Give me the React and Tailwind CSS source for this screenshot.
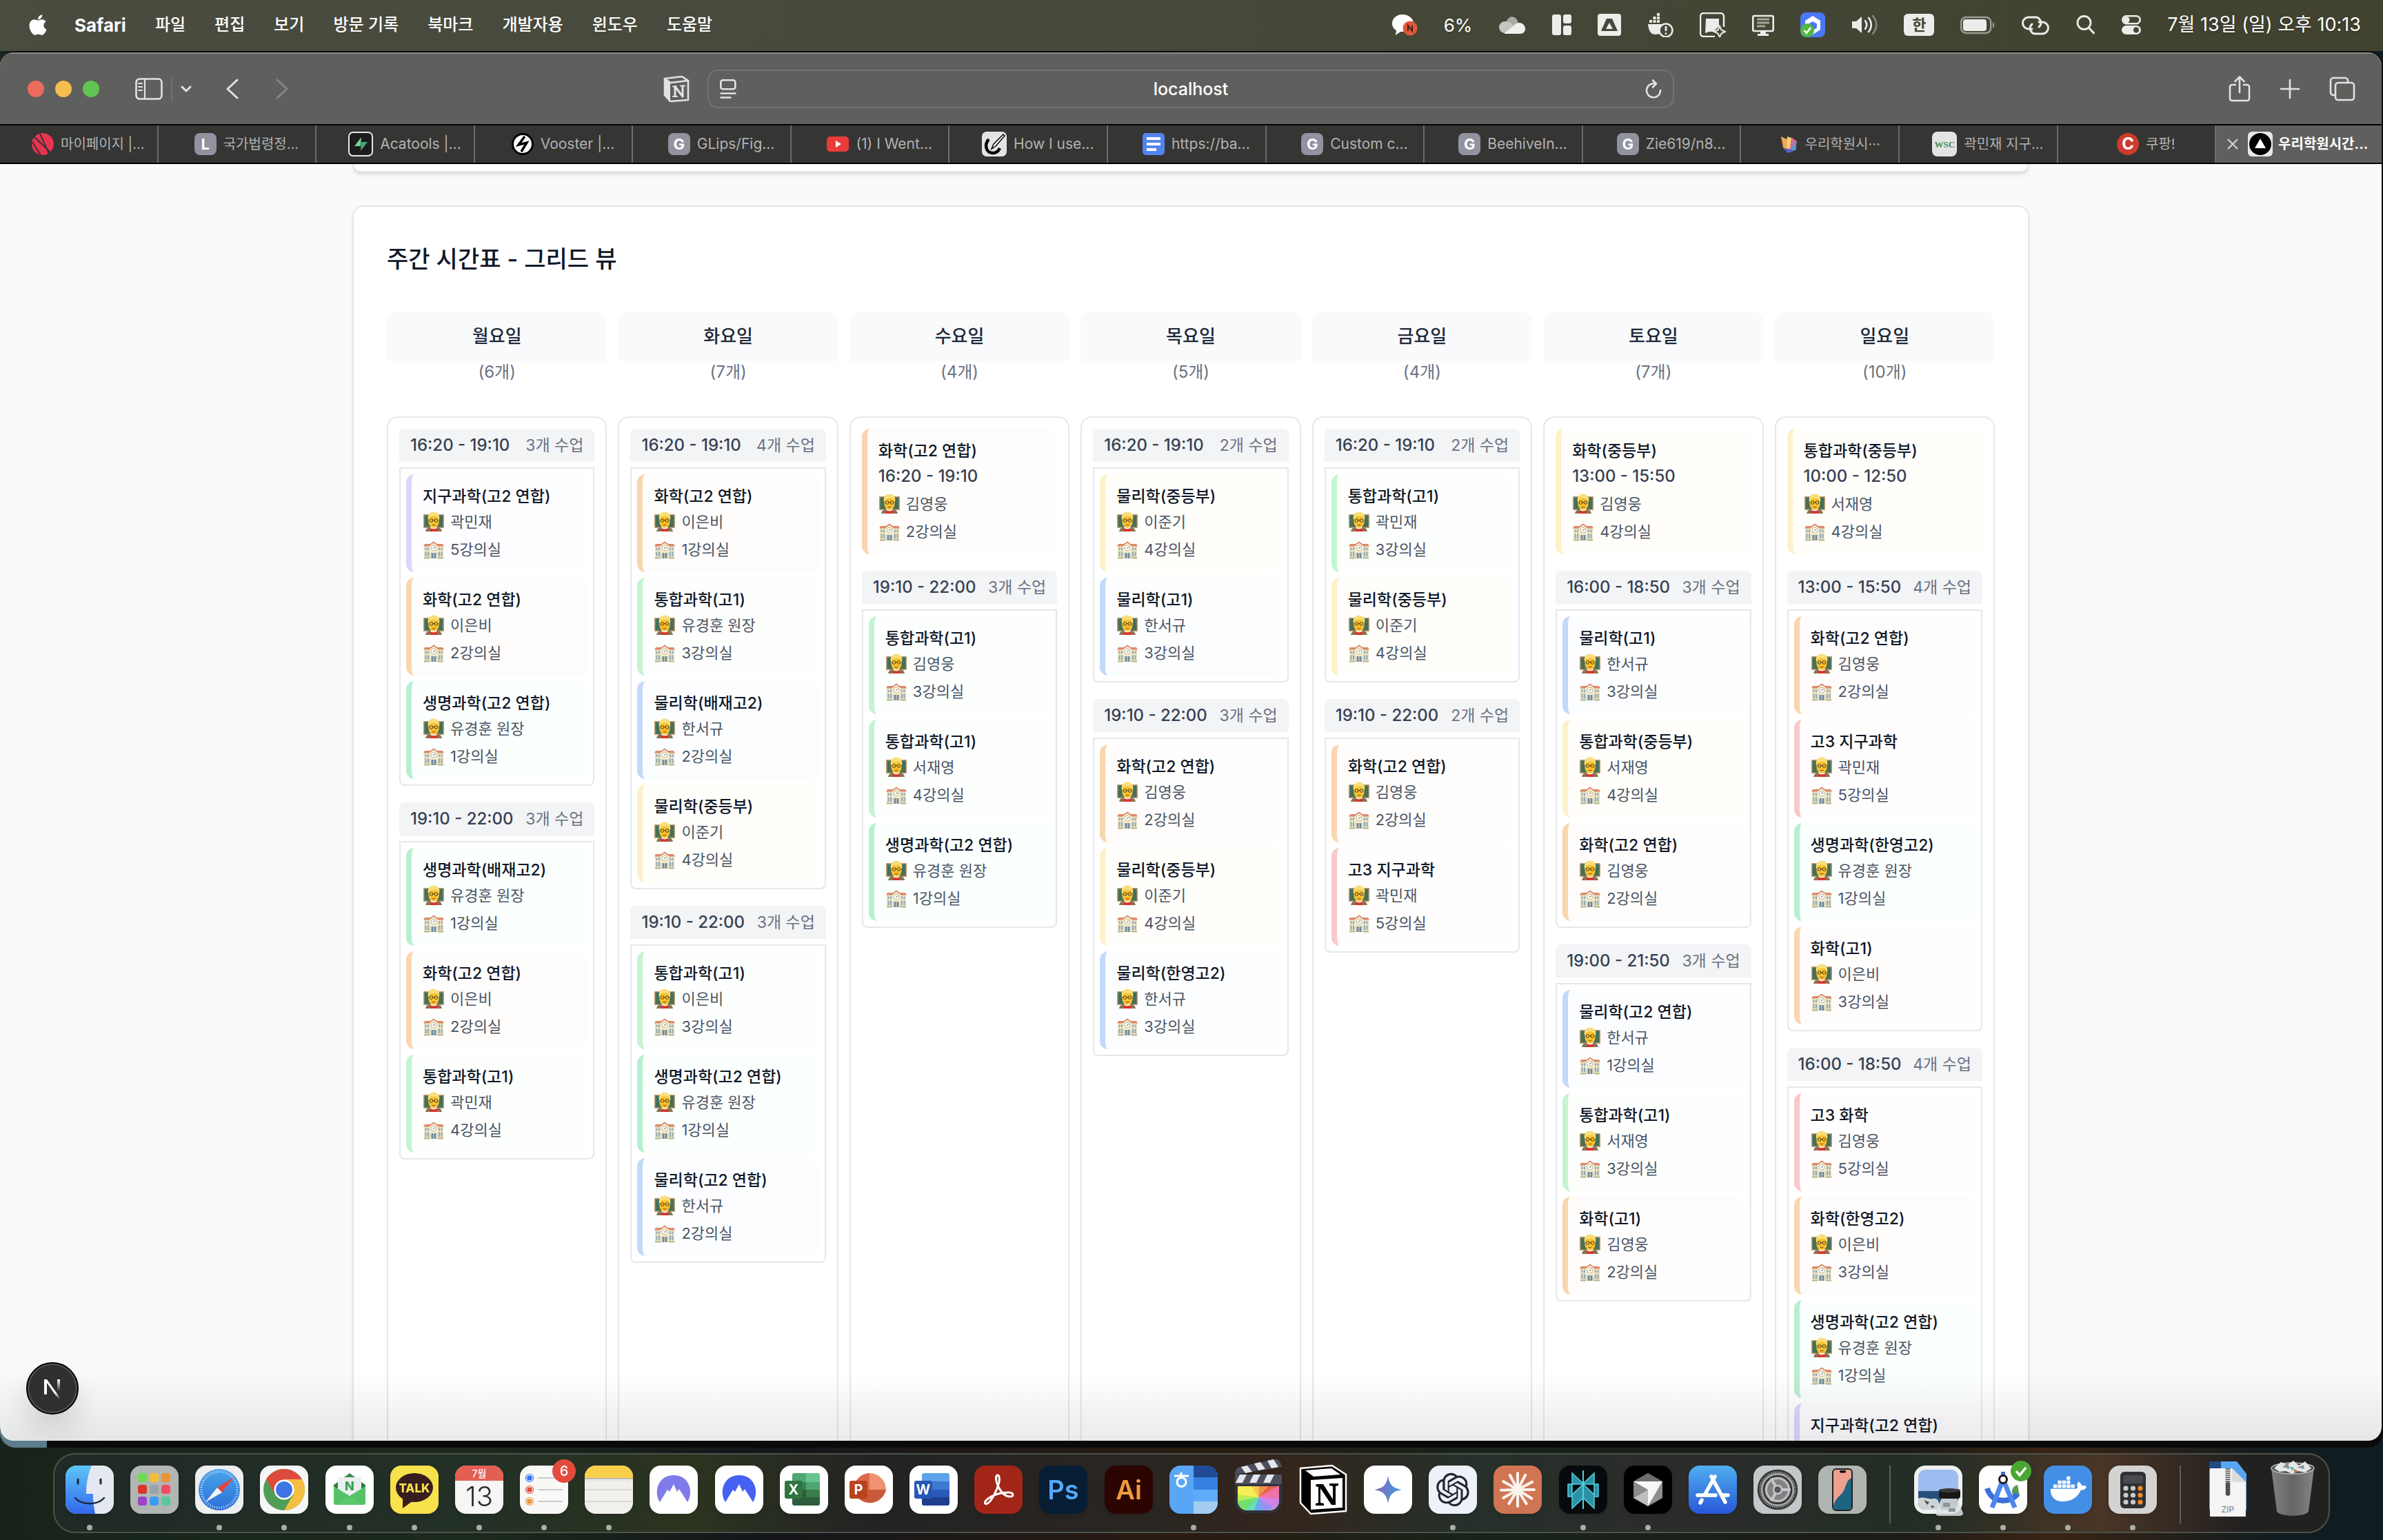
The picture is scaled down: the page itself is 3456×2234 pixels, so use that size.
import React from "react";
import { FaApple, FaDocker } from "react-icons/fa";
import { RiOpenaiFill } from "react-icons/ri";

/* ---------- timetable data ---------- */

const TONES = {
  purple: "border-[#ddd6fb] bg-violet-50/15",
  orange: "border-[#f9d6af] bg-orange-50/20",
  green: "border-[#c5f4d2] bg-green-50/15",
  emerald: "border-[#b7f0d1] bg-emerald-50/20",
  blue: "border-[#c3d9fb] bg-blue-50/20",
  yellow: "border-[#fcf1c9] bg-yellow-50/20",
  red: "border-[#f7c9ca] bg-red-50/15",
};

const c = (tone, name, teacher, room) => ({ tone, name, teacher, room });

const DAYS = [
  {
    day: "월요일",
    count: 6,
    slots: [
      {
        time: "16:20 - 19:10",
        items: [
          c("purple", "지구과학(고2 연합)", "곽민재", "5강의실"),
          c("orange", "화학(고2 연합)", "이은비", "2강의실"),
          c("emerald", "생명과학(고2 연합)", "유경훈 원장", "1강의실"),
        ],
      },
      {
        time: "19:10 - 22:00",
        items: [
          c("emerald", "생명과학(배재고2)", "유경훈 원장", "1강의실"),
          c("orange", "화학(고2 연합)", "이은비", "2강의실"),
          c("green", "통합과학(고1)", "곽민재", "4강의실"),
        ],
      },
    ],
  },
  {
    day: "화요일",
    count: 7,
    slots: [
      {
        time: "16:20 - 19:10",
        items: [
          c("orange", "화학(고2 연합)", "이은비", "1강의실"),
          c("green", "통합과학(고1)", "유경훈 원장", "3강의실"),
          c("blue", "물리학(배재고2)", "한서규", "2강의실"),
          c("yellow", "물리학(중등부)", "이준기", "4강의실"),
        ],
      },
      {
        time: "19:10 - 22:00",
        items: [
          c("green", "통합과학(고1)", "이은비", "3강의실"),
          c("emerald", "생명과학(고2 연합)", "유경훈 원장", "1강의실"),
          c("blue", "물리학(고2 연합)", "한서규", "2강의실"),
        ],
      },
    ],
  },
  {
    day: "수요일",
    count: 4,
    slots: [
      { time: "16:20 - 19:10", items: [c("orange", "화학(고2 연합)", "김영웅", "2강의실")] },
      {
        time: "19:10 - 22:00",
        items: [
          c("green", "통합과학(고1)", "김영웅", "3강의실"),
          c("green", "통합과학(고1)", "서재영", "4강의실"),
          c("emerald", "생명과학(고2 연합)", "유경훈 원장", "1강의실"),
        ],
      },
    ],
  },
  {
    day: "목요일",
    count: 5,
    slots: [
      {
        time: "16:20 - 19:10",
        items: [
          c("yellow", "물리학(중등부)", "이준기", "4강의실"),
          c("blue", "물리학(고1)", "한서규", "3강의실"),
        ],
      },
      {
        time: "19:10 - 22:00",
        items: [
          c("orange", "화학(고2 연합)", "김영웅", "2강의실"),
          c("yellow", "물리학(중등부)", "이준기", "4강의실"),
          c("blue", "물리학(한영고2)", "한서규", "3강의실"),
        ],
      },
    ],
  },
  {
    day: "금요일",
    count: 4,
    slots: [
      {
        time: "16:20 - 19:10",
        items: [
          c("green", "통합과학(고1)", "곽민재", "3강의실"),
          c("yellow", "물리학(중등부)", "이준기", "4강의실"),
        ],
      },
      {
        time: "19:10 - 22:00",
        items: [
          c("orange", "화학(고2 연합)", "김영웅", "2강의실"),
          c("red", "고3 지구과학", "곽민재", "5강의실"),
        ],
      },
    ],
  },
  {
    day: "토요일",
    count: 7,
    slots: [
      { time: "13:00 - 15:50", items: [c("yellow", "화학(중등부)", "김영웅", "4강의실")] },
      {
        time: "16:00 - 18:50",
        items: [
          c("blue", "물리학(고1)", "한서규", "3강의실"),
          c("yellow", "통합과학(중등부)", "서재영", "4강의실"),
          c("orange", "화학(고2 연합)", "김영웅", "2강의실"),
        ],
      },
      {
        time: "19:00 - 21:50",
        items: [
          c("blue", "물리학(고2 연합)", "한서규", "1강의실"),
          c("green", "통합과학(고1)", "서재영", "3강의실"),
          c("orange", "화학(고1)", "김영웅", "2강의실"),
        ],
      },
    ],
  },
  {
    day: "일요일",
    count: 10,
    slots: [
      { time: "10:00 - 12:50", items: [c("yellow", "통합과학(중등부)", "서재영", "4강의실")] },
      {
        time: "13:00 - 15:50",
        items: [
          c("orange", "화학(고2 연합)", "김영웅", "2강의실"),
          c("red", "고3 지구과학", "곽민재", "5강의실"),
          c("emerald", "생명과학(한영고2)", "유경훈 원장", "1강의실"),
          c("orange", "화학(고1)", "이은비", "3강의실"),
        ],
      },
      {
        time: "16:00 - 18:50",
        items: [
          c("red", "고3 화학", "김영웅", "5강의실"),
          c("orange", "화학(한영고2)", "이은비", "3강의실"),
          c("emerald", "생명과학(고2 연합)", "유경훈 원장", "1강의실"),
          c("purple", "지구과학(고2 연합)", "곽민재", "4강의실"),
        ],
      },
    ],
  },
];

/* ---------- timetable ---------- */

function TeacherIcon() {
  return (
    <svg className="size-[30px] shrink-0" viewBox="0 0 30 30" aria-hidden="true">
      <rect x="0" y="4" width="30" height="20" rx="1" fill="#c39a6d" />
      <rect x="1.500" y="5.500" width="27" height="17" fill="#44705a" />
      <path d="M3 29c1-5 5-7 12-7s11 2 12 7z" fill="#8a7352" />
      <path d="M10 29v-4l5-1 5 1v4z" fill="#d8342c" />
      <path d="M10.500 21.500h9v3l-4.500 1-4.500-1z" fill="#f3efe6" />
      <path d="M7.500 10c0-5 3-8 7.500-8s7.500 3 7.500 8v5c0 5-3.500 8.500-7.500 8.500S7.500 20 7.500 15z" fill="#fbc230" />
      <path d="M7 12C5.500 4 10 .5 15 .5S24.500 4 23 12l-1-1-1.500-3.500c-3-1-8-1-11 0L8 11z" fill="#f8df7c" />
      <circle cx="11.500" cy="13" r="2.300" fill="none" stroke="#4a3a1c" strokeWidth="1" />
      <circle cx="18.500" cy="13" r="2.300" fill="none" stroke="#4a3a1c" strokeWidth="1" />
      <path d="M13.800 12.700h2.400" stroke="#4a3a1c" strokeWidth="1" />
      <path d="M12.500 19c1.500 1 3.500 1 5 0" fill="none" stroke="#9a5b13" strokeWidth="1.200" />
    </svg>
  );
}

function SchoolIcon() {
  return (
    <svg className="size-[30px] shrink-0" viewBox="0 0 30 30" aria-hidden="true">
      <rect x="1" y="10" width="28" height="18" fill="#ebe3c2" />
      <path d="M0 10.500L2 7h26l2 3.500z" fill="#dd8a6b" />
      <rect x="9" y="9" width="12" height="19" fill="#f3ecd0" />
      <path d="M8 9.500L15 4.500l7 5" fill="#f3ecd0" stroke="#d9755a" strokeWidth="1.500" />
      <circle cx="15" cy="13" r="4" fill="#fefefb" stroke="#b5a97b" strokeWidth=".8" />
      <path d="M15 13l2-1.500M15 13l-1 1" stroke="#444" strokeWidth=".9" />
      <path
        d="M2.500 12.500h2v3.500h-2zM6 12.500h2v3.500H6zM22 12.500h2v3.500h-2zM25.500 12.500h2v3.500h-2zM2.500 18.500h2V25h-2zM6 18.500h2V25H6zM22 18.500h2V25h-2zM25.500 18.500h2V25h-2z"
        fill="#8fa8b8"
      />
      <rect x="11.500" y="20" width="7" height="8" fill="#6f8aa0" />
      <path d="M15 20v8M9.500 28v-9M20.500 28v-9" stroke="#e0d7b0" strokeWidth="1.200" />
      <path d="M1 26.500h8v2H1zM21 26.500h8v2h-8z" fill="#b3b389" />
    </svg>
  );
}

function Detail({ icon, children }) {
  return (
    <p className="flex items-center gap-[9px] pl-px text-[22px] leading-[34px] text-gray-600">
      {icon}
      {children}
    </p>
  );
}

function ClassCard({ item, time }) {
  return (
    <article className={`flex flex-col gap-[6px] rounded-xl border-l-8 p-4 ${TONES[item.tone]}`}>
      <h4 className="truncate text-[23px] leading-8 -mb-[2px] font-medium text-gray-900">{item.name}</h4>
      {time && <p className="text-[24px] leading-[34px] font-medium text-gray-700">{time}</p>}
      <Detail icon={<TeacherIcon />}>{item.teacher}</Detail>
      <Detail icon={<SchoolIcon />}>{item.room}</Detail>
    </article>
  );
}

function Slot({ slot }) {
  if (slot.items.length === 1) return <ClassCard item={slot.items[0]} time={slot.time} />;
  return (
    <section className="flex flex-col gap-2">
      <header className="flex items-center justify-between rounded-t-lg bg-gray-100 px-4 py-2 leading-8 whitespace-nowrap">
        <span className="text-[24px] font-medium text-gray-700">{slot.time}</span>
        <span className="text-[23px] text-gray-500">{slot.items.length}개 수업</span>
      </header>
      <div className="flex flex-col gap-2 rounded-b-lg border-2 border-gray-200 p-2">
        {slot.items.map((item, i) => (
          <ClassCard key={i} item={item} />
        ))}
      </div>
    </section>
  );
}

function Timetable() {
  return (
    <section className="rounded-2xl border-2 border-gray-200 bg-white p-12 shadow-md">
      <h2 className="text-[34px] leading-[56px] font-medium text-gray-900">주간 시간표 - 그리드 뷰</h2>
      <div className="mt-12 grid grid-cols-7 gap-4">
        {DAYS.map((d) => (
          <div key={d.day} className="flex min-w-0 flex-col">
            <h3 className="rounded-t-2xl bg-gray-50 py-4 text-center text-[26px] leading-10 font-medium text-gray-800">
              {d.day}
            </h3>
            <p className="mb-12 text-center text-[24px] leading-8 text-gray-500">({d.count}개)</p>
            <div className="flex min-h-[1600px] grow flex-col gap-6 rounded-2xl border-2 border-gray-200 p-4">
              {d.slots.map((s, i) => (
                <Slot key={i} slot={s} />
              ))}
            </div>
          </div>
        ))}
      </div>
    </section>
  );
}

/* ---------- menu bar ---------- */

const MENUS = ["파일", "편집", "보기", "방문 기록", "북마크", "개발자용", "윈도우", "도움말"];

function Glyph({ w = 36, h = 36, vw = 36, vh = 36, children }) {
  return (
    <svg width={w} height={h} viewBox={`0 0 ${vw} ${vh}`} fill="none" aria-hidden="true" className="shrink-0">
      {children}
    </svg>
  );
}

const F = "#ececea";

function StatusIcons() {
  return (
    <>
      <Glyph w={38} vw={38}>
        <path d="M16 3C7 3 1 9 1 16c0 4 2 8 6 10l-1 7 7-5h3c9 0 16-5 16-12S25 3 16 3z" fill="#fff" />
        <circle cx="27" cy="23" r="10.500" fill="#e2573b" />
        <path d="M24 27v-8l6 8v-8" stroke="#40211a" strokeWidth="2" />
      </Glyph>
      <span>6%</span>
      <Glyph w={40} vw={40}>
        <path d="M12 13C14 7 19 5 23 7s6 6 5 9l-8 8-10-4z" fill="#a9aaa2" />
        <path d="M9 30a8 8 0 0 1 1-17c4 0 7 1 10 4l10 13z" fill="#c5c6bf" />
        <path d="M9 30l17-14c7-3 13 2 13 8 0 4-3 7-7 7H9z" fill="#f0f0ee" />
      </Glyph>
      <Glyph w={28} vw={28}>
        <rect x="0" y="3" width="13" height="30" rx="3" fill={F} />
        <rect x="16" y="3" width="12" height="13" rx="3" fill={F} />
        <rect x="16" y="19" width="12" height="14" rx="3" fill={F} />
      </Glyph>
      <Glyph w={34} vw={34}>
        <rect x="0" y="2" width="34" height="32" rx="4" fill={F} />
        <path d="M13 9h8l8 18H5z" fill="#45483a" />
        <path d="M17 15l5 9H12z" fill={F} />
      </Glyph>
      <Glyph w={38} vw={38}>
        <path d="M1 17h24v5c-2 7-7 10-13 10S2 28 1 17z" fill={F} />
        <path d="M3 11h4v4H3zM8.500 11h4v4h-4zM14 11h4v4h-4zM8.500 6h4v4h-4zM14 6h4v4h-4zM14 1h4v4h-4z" fill={F} />
        <circle cx="27" cy="26" r="9.500" fill="#45483a" stroke={F} strokeWidth="2.500" />
        <path d="M27 20v7M27 29.500V32" stroke={F} strokeWidth="2.800" />
      </Glyph>
      <Glyph w={38} vw={38}>
        <path d="M22 35H6a5 5 0 0 1-5-5V6a5 5 0 0 1 5-5h24a5 5 0 0 1 5 5v15" stroke={F} strokeWidth="2.500" />
        <path d="M9 9h19v11l-8 8h-6l-6 2z" fill={F} />
        <path d="M29 20l2.500 5.500L37 28l-5.500 2.500L29 36l-2.500-5.500L21 28l5.500-2.500z" fill="#45483a" stroke={F} strokeWidth="2" />
      </Glyph>
      <Glyph w={32} vw={32}>
        <rect x="1.300" y="5" width="29.400" height="22" rx="2" stroke={F} strokeWidth="2.600" />
        <path d="M7 10h18M7 15h18M7 20h12" stroke="#a4a59c" strokeWidth="3" />
        <path d="M12 28h8v3h4v3H8v-3h4z" fill={F} />
      </Glyph>
      <Glyph w={36} vw={36}>
        <rect x="0" y="0" width="36" height="36" rx="8" fill="#4a78f6" />
        <path d="M18 5l11 7v13l-11 7-11-7V12z" fill="#fff" />
        <path d="M18 13l6 3.500v6L18 26l-6-3.500v-6z" fill="#4a78f6" />
        <circle cx="10" cy="26" r="10" fill="#53b83c" />
        <path d="M5.500 26l3.500 4 6-8" stroke="#fff" strokeWidth="2.600" />
      </Glyph>
      <Glyph w={38} vw={38}>
        <path d="M1 13h6l8-7v24l-8-7H1z" fill={F} />
        <path d="M20 12c3 4 3 8 0 12M25 8c5 6 5 14 0 20" stroke={F} strokeWidth="2.600" strokeLinecap="round" />
        <path d="M31 5c7 8 7 18 0 26" stroke="#85877b" strokeWidth="2.600" strokeLinecap="round" />
      </Glyph>
      <span className="flex h-8 w-11 items-center justify-center rounded-md bg-[#ececea] text-[22px] leading-none font-bold text-[#404336] text-shadow-none">
        한
      </span>
      <Glyph w={50} vw={50}>
        <rect x="1.200" y="7" width="43" height="23" rx="7" stroke="#9c9d94" strokeWidth="2.400" />
        <rect x="4" y="10" width="34" height="17" rx="4" fill={F} />
        <path d="M47 14c3 1 3 8 0 9z" fill="#9c9d94" />
      </Glyph>
      <Glyph w={42} vw={42}>
        <path d="M16 24h-5a8 8 0 0 1 0-17h9a8 8 0 0 1 6 14" stroke={F} strokeWidth="3" strokeLinecap="round" />
        <path d="M26 14h5a8 8 0 0 1 0 17h-9a8 8 0 0 1-6-14" stroke={F} strokeWidth="3" strokeLinecap="round" />
      </Glyph>
      <Glyph w={28} vw={28}>
        <circle cx="11.500" cy="15" r="9.500" stroke={F} strokeWidth="2.800" />
        <path d="M18.500 22.500l7 7.500" stroke={F} strokeWidth="3" strokeLinecap="round" />
      </Glyph>
      <Glyph w={28} vw={28}>
        <rect x="1.300" y="5.300" width="25.400" height="11" rx="5.500" stroke={F} strokeWidth="2.600" />
        <circle cx="7" cy="10.800" r="4.500" fill={F} />
        <rect x="0" y="19" width="28" height="13" rx="6.500" fill={F} />
        <circle cx="21" cy="25.500" r="4" fill="#45483a" />
      </Glyph>
    </>
  );
}

function MenuBar() {
  return (
    <nav className="flex h-[74px] shrink-0 items-center justify-between bg-linear-to-r from-[#4b4b40] via-[#45493a] to-[#41422f] pr-8 pb-[2px] pl-[38px] text-[24px] font-medium whitespace-nowrap text-white text-shadow-md">
      <div className="flex items-center gap-[42px]">
        <button aria-label="Apple" className="w-7">
          <FaApple className="size-[34px]" />
        </button>
        <button className="text-[26px] font-bold">Safari</button>
        {MENUS.map((m) => (
          <button key={m}>{m}</button>
        ))}
      </div>
      <div className="flex items-center gap-[38px] text-[26px] font-normal">
        <StatusIcons />
        <span className="text-[27px]">7월 13일 (일) 오후 10:13</span>
      </div>
    </nav>
  );
}

/* ---------- browser chrome ---------- */

const S = { stroke: "#e2e2e1", strokeWidth: 2.6, strokeLinecap: "round", strokeLinejoin: "round" };

function Toolbar() {
  return (
    <div className="grid h-[104px] shrink-0 grid-cols-[1fr_1402px_1fr] items-center border-t-2 border-[#8b8b8a] bg-[#5f5f5d]">
      <div className="flex items-center justify-between pr-[26px] pl-10">
        <div className="flex items-center">
          <div className="flex gap-4">
            <button aria-label="닫기" className="size-6 rounded-full bg-[#ed6a5e]" />
            <button aria-label="최소화" className="size-6 rounded-full bg-[#f4bf4f]" />
            <button aria-label="확대" className="size-6 rounded-full bg-[#61c554]" />
          </div>
          <button aria-label="사이드바" className="ml-[52px]">
            <Glyph w={40} h={32} vw={40} vh={32}>
              <rect x="1.500" y="1.500" width="37" height="29" rx="5" {...S} />
              <path d="M14 2v28M5 8h5M5 13h5M5 18h5" {...S} strokeWidth="2.200" />
            </Glyph>
          </button>
          <span className="ml-3 h-9 w-[2px] bg-[#737372]" />
          <button aria-label="탭 그룹" className="ml-3">
            <Glyph w={16} h={12} vw={16} vh={12}>
              <path d="M2 3l6 6 6-6" {...S} strokeWidth="3" />
            </Glyph>
          </button>
          <button aria-label="뒤로" className="ml-[50px]">
            <Glyph w={18} h={30} vw={18} vh={30}>
              <path d="M16 2L2 15l14 13" {...S} strokeWidth="3" />
            </Glyph>
          </button>
          <button aria-label="앞으로" className="ml-[54px]">
            <Glyph w={18} h={30} vw={18} vh={30}>
              <path d="M2 2l14 13L2 28" {...S} stroke="#878786" strokeWidth="3" />
            </Glyph>
          </button>
        </div>
        <button aria-label="Notion">
          <Glyph w={38} h={38} vw={38} vh={38}>
            <path d="M2 4l25-3 9 6v28l-26 2-8-9z" {...S} />
            <path d="M2 4l8 6 26-3" {...S} />
            <path d="M2 4l8 6v26l-8-9z" fill="#e2e2e1" />
            <path d="M17 29V15.500L28 30V15" {...S} strokeWidth="3" strokeLinecap="butt" />
            <path d="M14 15.500h5M25 14.500h6M14 30h6" {...S} strokeWidth="2" />
          </Glyph>
        </button>
      </div>
      <label className="flex h-14 items-center rounded-2xl border-2 border-[#747473] px-4">
        <Glyph w={24} h={28} vw={24} vh={28}>
          <rect x="1.300" y="1.300" width="21" height="13" rx="3" {...S} />
          <path d="M1.500 20.500h21M1.500 26.500h14" {...S} />
        </Glyph>
        <input
          aria-label="주소"
          defaultValue="localhost"
          className="min-w-0 grow bg-transparent text-center text-[25px] leading-8 font-medium text-white outline-none"
        />
        <button aria-label="새로 고침">
          <Glyph w={24} h={28} vw={24} vh={28}>
            <path d="M14 6.500A10 10 0 1 0 22 16M11 1.500l5 5-5 5" {...S} />
          </Glyph>
        </button>
      </label>
      <div className="flex items-center justify-end gap-[42px] pr-[38px]">
        <button aria-label="공유">
          <Glyph w={32} h={38} vw={32} vh={38}>
            <path d="M10 13H5a3 3 0 0 0-3 3v17a3 3 0 0 0 3 3h22a3 3 0 0 0 3-3V16a3 3 0 0 0-3-3h-5M16 24V2M9.500 8L16 1.500 22.500 8" {...S} />
          </Glyph>
        </button>
        <button aria-label="새 탭">
          <Glyph w={30} h={30} vw={30} vh={30}>
            <path d="M15 2v26M2 15h26" {...S} />
          </Glyph>
        </button>
        <button aria-label="탭 개요">
          <Glyph w={38} h={36} vw={38} vh={36}>
            <path d="M8 27H6a4 4 0 0 1-4-4V6a4 4 0 0 1 4-4h17a4 4 0 0 1 4 4v2" {...S} />
            <rect x="9" y="9" width="27" height="25" rx="4" {...S} />
          </Glyph>
        </button>
      </div>
    </div>
  );
}

function Letter({ children }) {
  return (
    <span className="flex size-8 shrink-0 items-center justify-center rounded-lg bg-[#9292a0] text-[22px] leading-none font-bold text-white">
      {children}
    </span>
  );
}

const FAVICONS = {
  red: (
    <Glyph w={32} h={32} vw={32} vh={32}>
      <circle cx="16" cy="16" r="16" fill="#ea3350" />
      <path d="M3 5l24 23M12 1l13 29M1 13l12 19" stroke="#353535" strokeWidth="2" />
    </Glyph>
  ),
  supa: (
    <Glyph w={36} h={36} vw={36} vh={36}>
      <rect x="1" y="1" width="34" height="34" rx="6" fill="#1c1c1c" stroke="#e6e6e6" strokeWidth="2" />
      <path d="M19 8L9 21h9z" fill="#6fd59b" />
      <path d="M18 28l10-13h-9z" fill="#48a772" />
    </Glyph>
  ),
  bolt: (
    <Glyph w={32} h={32} vw={32} vh={32}>
      <circle cx="16" cy="16" r="14.500" fill="#fff" stroke="#000" strokeWidth="3" />
      <path d="M19 5l-9 12 12-3-8 13" fill="none" stroke="#000" strokeWidth="3.500" />
    </Glyph>
  ),
  yt: (
    <Glyph w={32} h={32} vw={32} vh={32}>
      <rect x="0" y="5" width="32" height="22" rx="5" fill="#ea3b3b" />
      <path d="M13 11l8 5-8 5z" fill="#fff" />
    </Glyph>
  ),
  pen: (
    <Glyph w={36} h={36} vw={36} vh={36}>
      <rect width="36" height="36" rx="7" fill="#e4e4e4" />
      <path d="M10 11c-7 8-4 20 6 20 5 0 8-3 10-7" stroke="#000" strokeWidth="4.500" />
      <path d="M31 4L17 18l-3 7 6-4L33 6z" fill="#fff" stroke="#000" strokeWidth="1.500" />
    </Glyph>
  ),
  docs: (
    <Glyph w={32} h={32} vw={32} vh={32}>
      <rect width="32" height="32" rx="5" fill="#5384ee" />
      <path d="M6 8h20M6 16h20M6 24h14" stroke="#fff" strokeWidth="4" />
    </Glyph>
  ),
  petal: (
    <Glyph w={28} h={28} vw={28} vh={28}>
      <path d="M3 3l11 5v16L6 19z" fill="#f0a45c" />
      <path d="M12 3l8 3-4 18-5-4z" fill="#f5d36b" />
      <path d="M18 4l8 6-2 11-9 4z" fill="#d86a8e" />
      <path d="M24 8l1 14-9 4z" fill="#4f9bd6" />
      <path d="M6 20c5 0 12 1 16 4l-9 3z" fill="#5a63c4" />
    </Glyph>
  ),
  wsc: (
    <span className="flex size-9 shrink-0 items-center justify-center rounded-lg bg-[#e3e3e3] font-['Liberation_Serif'] text-[13px] leading-none font-bold text-[#3d8a55]">
      WSC
    </span>
  ),
  coupang: (
    <span className="flex size-8 shrink-0 items-center justify-center rounded-full bg-[#cc3b2d] text-[24px] leading-none font-bold text-white">
      C
    </span>
  ),
  vercel: (
    <Glyph w={36} h={36} vw={36} vh={36}>
      <rect width="36" height="36" rx="6" fill="#e8e8e8" />
      <circle cx="18" cy="18" r="16" fill="#000" />
      <path d="M18 10l8 14H10z" fill="#fff" />
    </Glyph>
  ),
};

const TABS = [
  ["red", "마이페이지 |...", true],
  ["L", "국가법령정...", true],
  ["supa", "Acatools |..."],
  ["bolt", "Vooster |..."],
  ["G", "GLips/Fig..."],
  ["yt", "(1) I Went..."],
  ["pen", "How I use..."],
  ["docs", "https://ba..."],
  ["G", "Custom c..."],
  ["G", "BeehiveIn..."],
  ["G", "Zie619/n8..."],
  ["petal", "우리학원시···", true],
  ["wsc", "곽민재 지구...", true],
  ["coupang", "쿠팡!", true],
];

function TabBar() {
  return (
    <div className="flex h-[58px] shrink-0 border-y-2 border-black bg-[#353534] text-[21px] whitespace-nowrap text-[#b2b2b1]">
      {TABS.map(([icon, label, korean], i) => (
        <button
          key={i}
          className="flex min-w-0 flex-1 items-center justify-center gap-[10px] overflow-hidden border-r-2 border-[#6c6c6b] pl-7"
        >
          {FAVICONS[icon] || <Letter>{icon}</Letter>}
          <span className={korean ? "text-[20px]" : ""}>{label}</span>
        </button>
      ))}
      <div className="flex w-[240px] shrink-0 items-center bg-[#5f5f5d] pl-4 text-white">
        <button aria-label="탭 닫기">
          <Glyph w={16} h={16} vw={16} vh={16}>
            <path d="M1 1l14 14M15 1L1 15" stroke="#d6d6d5" strokeWidth="2" />
          </Glyph>
        </button>
        <button className="flex items-center gap-2 pl-[14px] text-[20px] font-bold">
          {FAVICONS.vercel}
          <span>우리학원시간...</span>
        </button>
      </div>
    </div>
  );
}

function NextBadge() {
  return (
    <button
      aria-label="Next.js"
      className="absolute bottom-[38px] left-[38px] flex size-[76px] items-center justify-center rounded-full border-2 border-black bg-[#2f2f2f] shadow-2xl ring-2 ring-[#555] ring-inset"
    >
      <Glyph w={28} h={30} vw={28} vh={30}>
        <defs>
          <linearGradient id="nx-a" x1="0" y1="0" x2="0" y2="1">
            <stop offset=".7" stopColor="#fff" />
            <stop offset="1" stopColor="#fff" stopOpacity="0" />
          </linearGradient>
          <linearGradient id="nx-b" x1="0" y1="0" x2="0" y2="1">
            <stop offset="0" stopColor="#fff" />
            <stop offset="1" stopColor="#fff" stopOpacity="0" />
          </linearGradient>
        </defs>
        <path d="M2 24V2h4l20 28h-4L6 7v17z" fill="url(#nx-a)" />
        <path d="M21 2h4v17h-4z" fill="url(#nx-b)" />
      </Glyph>
    </button>
  );
}

/* ---------- dock ---------- */

function Tile({ bg = "#fff", children }) {
  return (
    <svg className="size-[70px] overflow-visible drop-shadow-md" viewBox="0 0 70 70" aria-hidden="true">
      <rect width="70" height="70" rx="16" fill={bg} />
      {children}
    </svg>
  );
}

function Grad({ id, from, to }) {
  return (
    <linearGradient id={id} x1="0" y1="0" x2="0" y2="1">
      <stop stopColor={from} />
      <stop offset="1" stopColor={to} />
    </linearGradient>
  );
}

function Word({ x = 35, y, size, fill = "#fff", weight = 700, children }) {
  return (
    <text x={x} y={y} fontSize={size} fill={fill} fontWeight={weight} textAnchor="middle">
      {children}
    </text>
  );
}

function Mountain({ color }) {
  return (
    <Tile>
      <path d="M15 53C6 40 11 14 35 14s29 26 20 39L43 34l-3 4-5-11-6 11-3-3z" fill={color} />
    </Tile>
  );
}

function Office({ letter, badge, children }) {
  return (
    <Tile>
      {children}
      <rect x="7" y="22" width="26" height="26" rx="3" fill={badge} />
      <Word x={20} y={42} size={20}>
        {letter}
      </Word>
    </Tile>
  );
}

const LAUNCH = ["#6fdc4d", "#f3bd3a", "#ef9035", "#d8372a", "#9aa3a8", "#ee4d62", "#9a45c9", "#3c9cf2", "#59c9a0"];
const ticks = (n) => Array.from({ length: n }, (_, i) => (i * 360) / n);

const APPS = {
  finder: (
    <Tile bg="#e4e8f0">
      <defs>
        <Grad id="fi" from="#5cc6f8" to="#3468ee" />
      </defs>
      <path d="M16 0h22c-5 12-8 24-8 41h10c0 10 1 20 3 29H16A16 16 0 0 1 0 54V16A16 16 0 0 1 16 0z" fill="url(#fi)" />
      <path d="M18 20v6M51 20v6" stroke="#1c2736" strokeWidth="3" strokeLinecap="round" />
      <path d="M14 47c10 11 32 11 42 0" fill="none" stroke="#1c2736" strokeWidth="2.500" strokeLinecap="round" />
    </Tile>
  ),
  launchpad: (
    <Tile bg="#b1b6b3">
      {LAUNCH.map((f, i) => (
        <rect key={i} x={11 + (i % 3) * 17} y={11 + Math.floor(i / 3) * 17} width="13" height="13" rx="3.500" fill={f} />
      ))}
    </Tile>
  ),
  safari: (
    <Tile bg="#eceef0">
      <defs>
        <Grad id="sa" from="#4aa3ea" to="#2b70d8" />
      </defs>
      <circle cx="35" cy="35" r="30" fill="url(#sa)" />
      {ticks(48).map((a, i) => (
        <path key={i} d="M35 7v3.500" stroke="#cfe4f8" strokeWidth="1" transform={`rotate(${a} 35 35)`} />
      ))}
      <path d="M56 17L39 39l-7-7z" fill="#e5453a" />
      <path d="M15 53l17-21 7 7z" fill="#f3f4f6" />
    </Tile>
  ),
  chrome: (
    <Tile bg="#f5f6f6">
      <circle cx="35" cy="35" r="30" fill="#509e55" />
      <path d="M35 20h26a30 30 0 0 1-26 45l13-22z" fill="#f5bf42" />
      <path d="M22 42L9 20a30 30 0 0 1 52 0H35z" fill="#dc4b3e" />
      <circle cx="35" cy="35" r="14.500" fill="#fff" />
      <circle cx="35" cy="35" r="12" fill="#3f76e4" />
    </Tile>
  ),
  mail: (
    <Tile>
      <path d="M27 17l8-6 8 6z" fill="#3a8a4d" />
      <path d="M12 28l6-4h34l6 4v15H12z" fill="#2f7a43" />
      <path d="M18 17h34v26H18z" fill="#eceeee" />
      <Word y={36} size={18} fill="#35a252" weight={800}>
        N
      </Word>
      <path d="M12 30l23 14 23-14v24a3 3 0 0 1-3 3H15a3 3 0 0 1-3-3z" fill="#56c268" />
      <path d="M35 44L14 57h42z" fill="#5ecb70" opacity=".6" />
    </Tile>
  ),
  kakao: (
    <Tile bg="#f7e24b">
      <ellipse cx="35" cy="32" rx="27" ry="21" fill="#371d1e" />
      <path d="M18 45l0 17 15-11z" fill="#371d1e" />
      <Word y={39} size={17} fill="#f7e24b" weight={800}>
        TALK
      </Word>
    </Tile>
  ),
  calendar: (
    <Tile bg="#f7f6f5">
      <path d="M0 22v-6A16 16 0 0 1 16 0h38a16 16 0 0 1 16 16v6z" fill="#e35f54" />
      <Word y={17} size={14} weight={500}>
        7월
      </Word>
      <Word y={59} size={40} fill="#2a2a2a" weight={300}>
        13
      </Word>
    </Tile>
  ),
  reminders: (
    <Tile bg="#f8f8f6">
      {["#3478f6", "#e2503f", "#e8973a"].map((f, i) => (
        <g key={f}>
          <circle cx="14" cy={18 + i * 17} r="5.500" fill="#fff" stroke={f} strokeWidth="1.200" />
          <circle cx="14" cy={18 + i * 17} r="3.800" fill={f} />
          <path d={`M26 ${18 + i * 17}h36`} stroke="#bdbdbf" strokeWidth="1.500" />
        </g>
      ))}
      <circle cx="64" cy="8" r="17" fill="#e24b3b" />
      <Word x={64} y={15} size={20} weight={500}>
        6
      </Word>
    </Tile>
  ),
  notes: (
    <Tile bg="#f1f0ec">
      <path d="M0 18v-2A16 16 0 0 1 16 0h38a16 16 0 0 1 16 16v2z" fill="#f8cf4b" />
      <path d="M0 19h70" stroke="#a8a8a4" strokeWidth="1.500" />
      <path d="M2 22h66" stroke="#b4b4b0" strokeWidth="1" strokeDasharray="1 2" />
      <path d="M0 35h70M0 52h70" stroke="#d0cfca" strokeWidth="1.500" />
    </Tile>
  ),
  nordPurple: <Mountain color="#7f7bea" />,
  nordBlue: <Mountain color="#4560f2" />,
  excel: (
    <Office letter="X" badge="#2f7640">
      <path d="M18 14a3 3 0 0 1 3-3h17v13H18z" fill="#4ea772" />
      <path d="M38 11h17a3 3 0 0 1 3 3v10H38z" fill="#65c58c" />
      <path d="M18 24h20v11H18z" fill="#3a8350" />
      <path d="M38 24h20v11H38z" fill="#4ea772" />
      <path d="M18 35h20v12H18z" fill="#2c5d3c" />
      <path d="M38 35h20v12H38z" fill="#3a7d4b" />
      <path d="M18 46h40v9a3 3 0 0 1-3 3H21a3 3 0 0 1-3-3z" fill="#2c5d3c" />
    </Office>
  ),
  powerpoint: (
    <Office letter="P" badge="#b9431f">
      <path d="M36 11v24H13a24 24 0 0 1 23-24z" fill="#dd6a49" />
      <path d="M36 11a24 24 0 0 1 24 24H36z" fill="#f09272" />
      <path d="M13 35h47a24 24 0 0 1-47 0z" fill="#c9593a" />
    </Office>
  ),
  word: (
    <Office letter="W" badge="#2757b5">
      <path d="M18 14a3 3 0 0 1 3-3h34a3 3 0 0 1 3 3v9H18z" fill="#5ba3ea" />
      <path d="M18 23h40v12H18z" fill="#3f78cf" />
      <path d="M18 35h40v11H18z" fill="#2b59b8" />
      <path d="M18 46h40v9a3 3 0 0 1-3 3H21a3 3 0 0 1-3-3z" fill="#1f3f8c" />
    </Office>
  ),
  acrobat: (
    <Tile bg="#a32517">
      <path
        d="M34 14c-4 0-3 9 1 17s10 14 17 14c6 0 5-6-2-6-12 0-22 3-30 9-7 5-5 9-1 7 6-3 14-19 17-31 1-6 0-10-2-10z"
        fill="none"
        stroke="#fff"
        strokeWidth="3"
      />
    </Tile>
  ),
  ps: (
    <Tile bg="#071d33">
      <Word y={49} size={38} fill="#54a8f8" weight={600}>
        Ps
      </Word>
    </Tile>
  ),
  ai: (
    <Tile bg="#2c0502">
      <Word y={49} size={38} fill="#f09c39" weight={600}>
        Ai
      </Word>
    </Tile>
  ),
  hangul: (
    <Tile bg="#5aa6f6">
      <path d="M35 0h19a16 16 0 0 1 16 16v2H35z" fill="#1f4b96" />
      <path d="M35 17h35v18H35z" fill="#3580e0" />
      <path d="M35 35h35v17H35z" fill="#60abf8" />
      <path d="M35 52h35v2a16 16 0 0 1-16 16H35z" fill="#a3cdf2" />
      <path d="M17 10v5M7 15h21" stroke="#fff" strokeWidth="3" />
      <circle cx="17.500" cy="24" r="6.500" fill="none" stroke="#fff" strokeWidth="3" />
    </Tile>
  ),
  finalcut: (
    <svg className="size-[70px] overflow-visible" viewBox="0 0 70 70" aria-hidden="true">
      <path d="M1 14h68v38a17 17 0 0 1-17 17H18A17 17 0 0 1 1 52z" fill="#30323f" />
      <path d="M5 30h60v21a14 14 0 0 1-14 14H19A14 14 0 0 1 5 51z" fill="#f7ee55" />
      <path d="M35 46L37 30H25z" fill="#f8c750" />
      <path d="M35 46L50 30H36z" fill="#f0924e" />
      <path d="M35 46L65 30H49z" fill="#ec5f4a" />
      <path d="M35 46L65 29v21z" fill="#ee72a8" />
      <path d="M35 46l30 2v3c0 5-3 10-8 12z" fill="#d283ea" />
      <path d="M35 46l23 16c-4 3-8 3-16 3z" fill="#9a90f4" />
      <path d="M35 46l8 19H28z" fill="#6fa8f5" />
      <path d="M35 46l-6 19h-9l-6-1z" fill="#66dfb0" />
      <path d="M35 46L15 64c-6-2-10-8-10-13z" fill="#6fe070" />
      <path d="M35 46L5 52V42z" fill="#b9ee55" />
      <path d="M1 13h68v14H1z" fill="#4c4f5c" />
      <path d="M8 13h10l-6 12H2zM28 13h10l-6 12H22zM48 13h10l-6 12H42z" fill="#e4e6ec" />
      <path d="M1 12C2 4 6 2 12 1L58-9c6-1 9 3 11 11L2 13z" fill="#4c4f5c" />
      <path d="M10 2l9-2 7 9-10 2zM29-3l9-2 7 10-10 2zM48-7l9-2 7 11-10 2z" fill="#e4e6ec" />
    </svg>
  ),
  notion: (
    <svg className="size-[70px] overflow-visible" viewBox="0 0 70 70" aria-hidden="true">
      <path d="M2 4L48 0l20 13v53l-51 4L2 54z" fill="#000" stroke="#fff" strokeWidth="2.500" strokeLinejoin="round" />
      <path d="M9 7l38-3 13 9-39 3z" fill="#fff" />
      <path d="M17 21l46-3v43l-46 3z" fill="#fff" />
      <path d="M25 27h10l14 22V30l-5-1v-3h13v3l-4 1v27h-6L31 33v21l5 1v3H24v-3l4-1V31l-4-1z" fill="#000" />
    </svg>
  ),
  gemini: (
    <Tile>
      <defs>
        <linearGradient id="ge" x1="0" y1="0" x2="1" y2="0">
          <stop stopColor="#8a68b8" />
          <stop offset="1" stopColor="#3f9fe0" />
        </linearGradient>
      </defs>
      <path d="M35 15c2 13 7 18 20 20-13 2-18 7-20 20-2-13-7-18-20-20 13-2 18-7 20-20z" fill="url(#ge)" />
    </Tile>
  ),
  chatgpt: (
    <Tile bg="#eef1f8">
      <RiOpenaiFill x="6" y="6" size={58} color="#23272f" />
    </Tile>
  ),
  claude: (
    <Tile bg="#d07553">
      {[0, 28, 62, 90, 122, 148, 180, 212, 240, 268, 300, 332].map((a) => (
        <path key={a} d="M35 35V11" stroke="#fbf3ee" strokeWidth="4" strokeLinecap="round" transform={`rotate(${a} 35 35)`} />
      ))}
    </Tile>
  ),
  perplexity: (
    <Tile bg="#060a0c">
      <path d="M35 26L19 11v34H13V27h44v18h-6V11L35 26zM35 27L19 42v20l16-15 16 15V42z" fill="#2b91a4" stroke="#55d0e0" strokeWidth="1.500" />
      <path d="M35 7v56" stroke="#55d0e0" strokeWidth="2" />
    </Tile>
  ),
  cursor: (
    <Tile bg="#000">
      <path d="M35 11l21 12v24L35 59 14 47V23z" fill="#4b4b4b" />
      <path d="M35 11l21 12H14z" fill="#6e6e6e" />
      <path d="M14 23v24l21-12z" fill="#8b8b8b" />
      <path d="M14 47l21-12v24z" fill="#bdbdbd" />
      <path d="M56 23v24L35 59z" fill="#8e8e8e" />
      <path d="M14 23h42L35 59V35z" fill="#f7f7f7" />
    </Tile>
  ),
  appstore: (
    <Tile bg="url(#as)">
      <defs>
        <Grad id="as" from="#50aef0" to="#2858d8" />
      </defs>
      <g stroke="#fff" strokeWidth="5.500" strokeLinecap="round">
        <path d="M38 16L23 43M33 16l20 37M13 43h26M48 43h9M19 50l-2 4" />
      </g>
    </Tile>
  ),
  settings: (
    <Tile bg="#c3c8ca">
      <circle cx="35" cy="35" r="28" fill="#a2a4a5" stroke="#3a3a3a" strokeWidth="2.500" />
      <circle cx="35" cy="35" r="26" fill="none" stroke="#333" strokeWidth="4" strokeDasharray="1.500 1.200" />
      <circle cx="35" cy="35" r="20" fill="#808284" stroke="#2f3032" strokeWidth="2.500" />
      <circle cx="35" cy="35" r="16.500" fill="none" stroke="#bcbebf" strokeWidth="3" />
      {[90, 210, 330].map((a) => (
        <path key={a} d="M35 31V16" stroke="#c4c6c7" strokeWidth="4" transform={`rotate(${a} 35 35)`} />
      ))}
      <circle cx="35" cy="35" r="6" fill="#55575a" stroke="#c4c6c7" strokeWidth="2.500" />
    </Tile>
  ),
  iphone: (
    <Tile bg="#b0b5b1">
      <rect x="21" y="5" width="28" height="60" rx="5" fill="#eea08e" stroke="#1d2226" strokeWidth="2" />
      <path d="M22 60c2-14 12-16 16-26 3-8 4-13 10-16v42a4 4 0 0 1-4 4H26a4 4 0 0 1-4-4z" fill="#1e6480" />
      <rect x="31" y="7" width="9" height="3.500" rx="1.700" fill="#000" />
    </Tile>
  ),
  preview: (
    <Tile bg="#f0f0f0">
      <rect x="6" y="6" width="58" height="58" rx="10" fill="#9dbdf0" />
      <path d="M6 37h58v17a10 10 0 0 1-10 10H16A10 10 0 0 1 6 54z" fill="#274f7c" />
      <path d="M6 48c8-4 14 2 22 0s8 8 12 16H16A10 10 0 0 1 6 54z" fill="#cdd4d8" />
      <path d="M14 50l8 3-3 4zM24 58l6 1-4 3z" fill="#5c4a3c" />
      <path d="M40 47h22l9 22c0 3-3 4-6 4H37c-3 0-6-1-6-4z" fill="#dfe1e2" opacity=".85" />
      <path d="M42 54h10v6H42zM50 62h10v5H50z" fill="#8b9499" />
      <rect x="36" y="34" width="31" height="14" rx="4" fill="#181818" />
      <ellipse cx="51" cy="36" rx="15" ry="3" fill="#3a3a3a" />
    </Tile>
  ),
  android: (
    <Tile>
      <path d="M48 40a10 10 0 0 1 8-12l3 16-6 4z" fill="#5a9a55" />
      <path d="M12 33c6 22 34 22 44 8" fill="none" stroke="#3c6fd8" strokeWidth="8" />
      <path d="M35 20L19 61M35 20l17 41" stroke="#4f86ee" strokeWidth="7" />
      <path d="M35 9v6" stroke="#3c6fd8" strokeWidth="6" />
      <circle cx="35" cy="20" r="5.500" fill="#fff" stroke="#1c1c1c" strokeWidth="3" />
      <circle cx="61" cy="8" r="15" fill="#4ba633" />
      <path d="M54 8l5 6 9-11" fill="none" stroke="#fff" strokeWidth="3.500" />
    </Tile>
  ),
  docker: (
    <Tile bg="#448fe6">
      <FaDocker x="10" y="8" size={52} color="#fff" />
    </Tile>
  ),
  calculator: (
    <Tile bg="#d4d3d1">
      <rect x="17" y="9" width="37" height="53" rx="6" fill="#2f3033" />
      <rect x="21" y="14" width="29" height="12" rx="3" fill="#4a4b4f" />
      {[0, 1, 2].map((r) =>
        [0, 1, 2].map((k) => (
          <circle key={`${r}${k}`} cx={25 + k * 10.5} cy={33 + r * 10} r="3.600" fill={k === 2 ? "#f08a24" : "#c9c9cb"} />
        )),
      )}
    </Tile>
  ),
  zip: (
    <svg className="size-[70px] overflow-visible" viewBox="0 0 70 70" aria-hidden="true">
      <path d="M8-6h40l14 18v52H8z" fill="#5aa6f2" />
      <path d="M8-6h17v12H8z" fill="#1f4a86" />
      <path d="M9 4h32l20 20v50H9z" fill="#f4f4f4" />
      <path d="M41 4l20 20H45a4 4 0 0 1-4-4z" fill="#dcdcdc" />
      <path d="M35 4v38" stroke="#6f7274" strokeWidth="7" strokeDasharray="2 1" />
      <rect x="32" y="24" width="6" height="20" rx="3" fill="#4c4f52" />
      <Word y={68} size={12} fill="#777" weight={400}>
        ZIP
      </Word>
    </svg>
  ),
  trash: (
    <svg className="size-[70px] overflow-visible" viewBox="0 0 70 70" aria-hidden="true">
      <defs>
        <linearGradient id="tr" x1="0" y1="0" x2="1" y2="0">
          <stop stopColor="#8a8c8c" />
          <stop offset=".5" stopColor="#6b6d6d" />
          <stop offset="1" stopColor="#8f9191" />
        </linearGradient>
      </defs>
      <path d="M4 4h62l-8 62c-1 9-45 9-46 0z" fill="url(#tr)" opacity=".9" />
      <ellipse cx="35" cy="4" rx="31" ry="8" fill="#4f5252" stroke="#b9bbbb" strokeWidth="1.500" />
      <path d="M8 4l10-9 9 4 9-6 8 7 9-6 9 10-9 6-10-2-9 4-9-4-9 1z" fill="#e5e6e6" />
      <path d="M20 2l8-5 3 8zM42 3l9-4 1 6z" fill="#8d9092" />
      <path d="M31 2l6 1-2 5z" fill="#3fb6a0" />
      <path d="M37 5l6 3-6 2z" fill="#c96a55" />
    </svg>
  ),
};

const DOCK = [
  ["finder", 1], ["launchpad"], ["safari", 1], ["chrome", 1], ["mail", 1], ["kakao", 1], ["calendar", 1],
  ["reminders", 1], ["notes", 1], ["nordPurple"], ["nordBlue"], ["excel"], ["powerpoint"], ["word"], ["acrobat"],
  ["ps"], ["ai"], ["hangul", 1], ["finalcut"], ["notion"], ["gemini"], ["chatgpt", 1], ["claude"],
  ["perplexity", 1], ["cursor", 1], ["appstore"], ["settings"], ["iphone"], null,
  ["preview", 1], ["android", 1], ["docker", 1], ["calculator", 1], null, ["zip"], ["trash"],
];

function Dock() {
  return (
    <nav className="mx-[77px] mt-2 mb-[10px] flex h-[116px] shrink-0 items-start justify-between rounded-[32px] border-2 border-[#4b524b] bg-[linear-gradient(90deg,#202a26_0%,#233026_18%,#2c3420_28%,#232323_36%,#2a2622_48%,#33251c_54%,#26302a_62%,#2c2c2a_72%,#222e26_82%,#4a3526_90%,#232120_96%)] px-4 pt-4">
      {DOCK.map((d, i) =>
        d ? (
          <button key={i} aria-label={d[0]} className="flex w-[70px] flex-col items-center gap-4">
            {APPS[d[0]]}
            {d[1] ? <span className="size-2 rounded-full bg-[#a9aea9]" /> : null}
          </button>
        ) : (
          <span key={i} className="flex h-[84px] w-5 justify-center">
            <span className="w-[2px] bg-[#5b5f5a]" />
          </span>
        ),
      )}
    </nav>
  );
}

/* ---------- desktop ---------- */

export default function App() {
  return (
    <div className="flex h-screen flex-col overflow-hidden bg-[linear-gradient(90deg,#18241a_0%,#1c2a1c_20%,#14161a_32%,#2a1c12_50%,#18241a_62%,#1e1c18_80%,#3a2414_86%,#101c20_96%)] font-['Inter','Noto_Sans_CJK_KR',sans-serif]">
      <MenuBar />
      <div className="flex min-h-0 grow flex-col rounded-[22px] bg-[#0a0a0a] bg-[linear-gradient(#5d7c8c,#5d7c8c)] bg-[length:68px_24px] bg-bottom-left bg-no-repeat pt-[2px] pr-[2px] pb-[10px]">
        <main className="relative flex min-h-0 grow flex-col overflow-hidden rounded-[20px] bg-gray-50">
          <Toolbar />
          <TabBar />
          <div className="min-h-0 grow overflow-y-auto [scrollbar-width:none]">
            <div className="mx-auto flex max-w-[2560px] flex-col gap-12 px-16 pb-12">
              <div className="h-3 rounded-b-2xl border-x-2 border-b-2 border-gray-200 bg-white shadow-md" />
              <Timetable />
            </div>
          </div>
          <div className="pointer-events-none absolute inset-x-0 bottom-0 h-[100px] bg-linear-to-b from-transparent to-black/8" />
          <NextBadge />
        </main>
      </div>
      <Dock />
    </div>
  );
}
